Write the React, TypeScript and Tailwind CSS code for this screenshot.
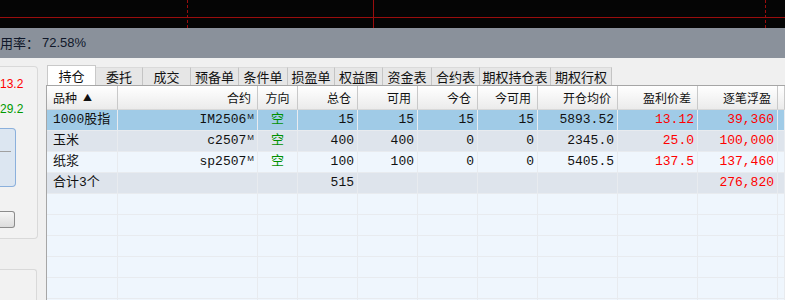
import React from 'react';

const cols = 'grid grid-cols-[71px_140px_40px_60px_60px_60px_60px_80px_80px_80px_1fr]';

const tabs = ['持仓', '委托', '成交', '预备单', '条件单', '损盈单', '权益图', '资金表', '合约表', '期权持仓表', '期权行权'];
const tabWidths = ['w-[49px]', 'w-[47px]', 'w-[48px]', 'w-[48px]', 'w-[49px]', 'w-[47px]', 'w-[48px]', 'w-[49px]', 'w-[48px]', 'w-[71px]', 'w-[61px]'];

type Row = {
  name: string;
  code: string;
  dir: string;
  total: string;
  avail: string;
  today: string;
  todayAvail: string;
  price: string;
  diff: string;
  pnl: string;
  bg: string;
};

const rows: Row[] = [
  { name: '1000股指', code: 'IM2506', dir: '空', total: '15', avail: '15', today: '15', todayAvail: '15', price: '5893.52', diff: '13.12', pnl: '39,360', bg: 'bg-[#a0cbe7]' },
  { name: '玉米', code: 'c2507', dir: '空', total: '400', avail: '400', today: '0', todayAvail: '0', price: '2345.0', diff: '25.0', pnl: '100,000', bg: 'bg-[#dee4ec]' },
  { name: '纸浆', code: 'sp2507', dir: '空', total: '100', avail: '100', today: '0', todayAvail: '0', price: '5405.5', diff: '137.5', pnl: '137,460', bg: 'bg-[#eff6fd]' },
];

const font = { fontFamily: '"Liberation Mono", "Noto Sans CJK SC", monospace' };
const cjk = { fontFamily: '"Noto Sans CJK SC", "Liberation Sans", sans-serif' };
const sans = { fontFamily: '"Liberation Sans", sans-serif' };

function Cell({ children, align = 'right', className = '' }: { children?: React.ReactNode; align?: 'left' | 'right' | 'center'; className?: string }) {
  const a = align === 'left' ? 'justify-start pl-[6px]' : align === 'center' ? 'justify-center' : 'justify-end pr-[3px]';
  return (
    <div className={`h-[21px] flex items-center border-r border-b border-[#e8ebef] text-[13px] whitespace-nowrap ${a} ${className}`}>
      {children}
    </div>
  );
}

function Head({ children, align = 'right' }: { children?: React.ReactNode; align?: 'left' | 'right' | 'center' }) {
  const a = align === 'left' ? 'justify-start pl-[6px]' : align === 'center' ? 'justify-center' : 'justify-end pr-[6px]';
  return (
    <div className={`h-[24px] flex items-center text-[12px] text-[#111] bg-gradient-to-b from-[#ffffff] to-[#ebebeb] border-r border-[#c9c9c9] border-b border-b-[#d8d8d8] ${a}`} style={cjk}>
      {children}
    </div>
  );
}

export default function App() {
  return (
    <div className="w-[785px] h-[300px] overflow-hidden bg-[#f0f0f0] flex flex-col select-none">
      {/* chart strip */}
      <div className="relative h-[28px] bg-[#050505] shrink-0">
        <div className="absolute left-0 right-0 top-[17px] h-px bg-[#9a0d0d]" />
        <div className="absolute top-0 bottom-0 left-[187px] border-l border-dashed border-[#9a0d0d]" />
        <div className="absolute top-0 bottom-0 left-[373px] w-px bg-[#9a0d0d]" />
        <div className="absolute top-0 bottom-0 left-[765px] border-l border-dashed border-[#9a0d0d]" />
      </div>

      {/* status bar */}
      <div className="h-[30px] bg-[#8a919b] shrink-0 flex items-center text-[13px] text-[#10182a]">
        <span style={cjk}>用率：</span>
        <span className="ml-[3px]" style={sans}>72.58%</span>
      </div>

      <div className="flex flex-1 min-h-0">
        {/* left panel */}
        <div className="w-[46px] shrink-0 flex flex-col">
          <div className="mt-[8px] w-[38px] h-[173px] border border-l-0 border-[#d9d9d9] rounded-r-[4px] bg-[#f2f2f2] flex flex-col">
            <div className="h-[16px] mt-[8px] pr-[15px] text-right text-[12px] text-[#ff0000]" style={sans}>13.2</div>
            <div className="h-[16px] mt-[9px] pr-[15px] text-right text-[12px] text-[#009a00]" style={sans}>29.2</div>
            <div className="mt-[12px] w-[16px] h-[59px] border border-l-0 border-[#8bb0dc] rounded-r-[4px] bg-[#dce6f1] flex flex-col">
              <div className="mt-[22px] w-[11px] h-px bg-[#a0a0a0]" />
            </div>
            <div className="mt-[24px] w-[15px] h-[17px] border border-l-0 border-[#8c8c8c] rounded-r-[3px] bg-gradient-to-b from-[#f6f6f6] to-[#dcdcdc]" />
          </div>
          <div className="mt-[30px] w-[37px] flex-1 border border-l-0 border-b-0 border-[#d9d9d9] rounded-tr-[3px] bg-[#f2f2f2]" />
        </div>

        {/* positions */}
        <div className="flex-1 flex flex-col min-w-0">
          <div className="h-[27px] flex items-end pl-px">
            {tabs.map((t, i) => (
              <div
                key={t}
                className={`${tabWidths[i]} flex items-center justify-center text-[13px] text-[#111] ${
                  i === 0
                    ? 'h-[20px] bg-white border-t border-l border-r border-[#c9c9c9]'
                    : 'h-[18px] bg-[#e6e6e6] border-r border-[#c4c4c4] border-t border-t-[#dadada]'
                }`}
                style={cjk}
              >
                {t}
              </div>
            ))}
          </div>

          <div className="flex-1 border-l border-t border-[#a6a6a6] bg-[#eff6fd] min-h-0 overflow-hidden">
            <div className={cols}>
              <Head align="left">品种 <span className="ml-[6px] text-[9px]">▲</span></Head>
              <Head>合约</Head>
              <Head align="center">方向</Head>
              <Head>总仓</Head>
              <Head>可用</Head>
              <Head>今仓</Head>
              <Head>今可用</Head>
              <Head>开仓均价</Head>
              <Head>盈利价差</Head>
              <Head>逐笔浮盈</Head>
              <Head />
            </div>

            {rows.map((r) => (
              <div key={r.code} className={`${cols} ${r.bg} text-[#111]`} style={font}>
                <Cell align="left">{r.name}</Cell>
                <Cell>
                  <span>{r.code}</span>
                  <span className="self-start mt-[3px] ml-px text-[8px] leading-none" style={sans}>M</span>
                </Cell>
                <Cell align="center" className="text-[#009000]">{r.dir}</Cell>
                <Cell>{r.total}</Cell>
                <Cell>{r.avail}</Cell>
                <Cell>{r.today}</Cell>
                <Cell>{r.todayAvail}</Cell>
                <Cell>{r.price}</Cell>
                <Cell className="text-[#ff0000]">{r.diff}</Cell>
                <Cell className="text-[#ff0000]">{r.pnl}</Cell>
                <Cell />
              </div>
            ))}

            <div className={`${cols} bg-[#dee4ec] text-[#111]`} style={font}>
              <Cell align="left">合计3个</Cell>
              <Cell />
              <Cell />
              <Cell>515</Cell>
              <Cell />
              <Cell />
              <Cell />
              <Cell />
              <Cell />
              <Cell className="text-[#ff0000]">276,820</Cell>
              <Cell />
            </div>

            {[0, 1, 2, 3, 4, 5].map((i) => (
              <div key={i} className={cols}>
                {Array.from({ length: 11 }).map((_, j) => (
                  <Cell key={j} />
                ))}
              </div>
            ))}
          </div>
        </div>
      </div>
    </div>
  );
}
